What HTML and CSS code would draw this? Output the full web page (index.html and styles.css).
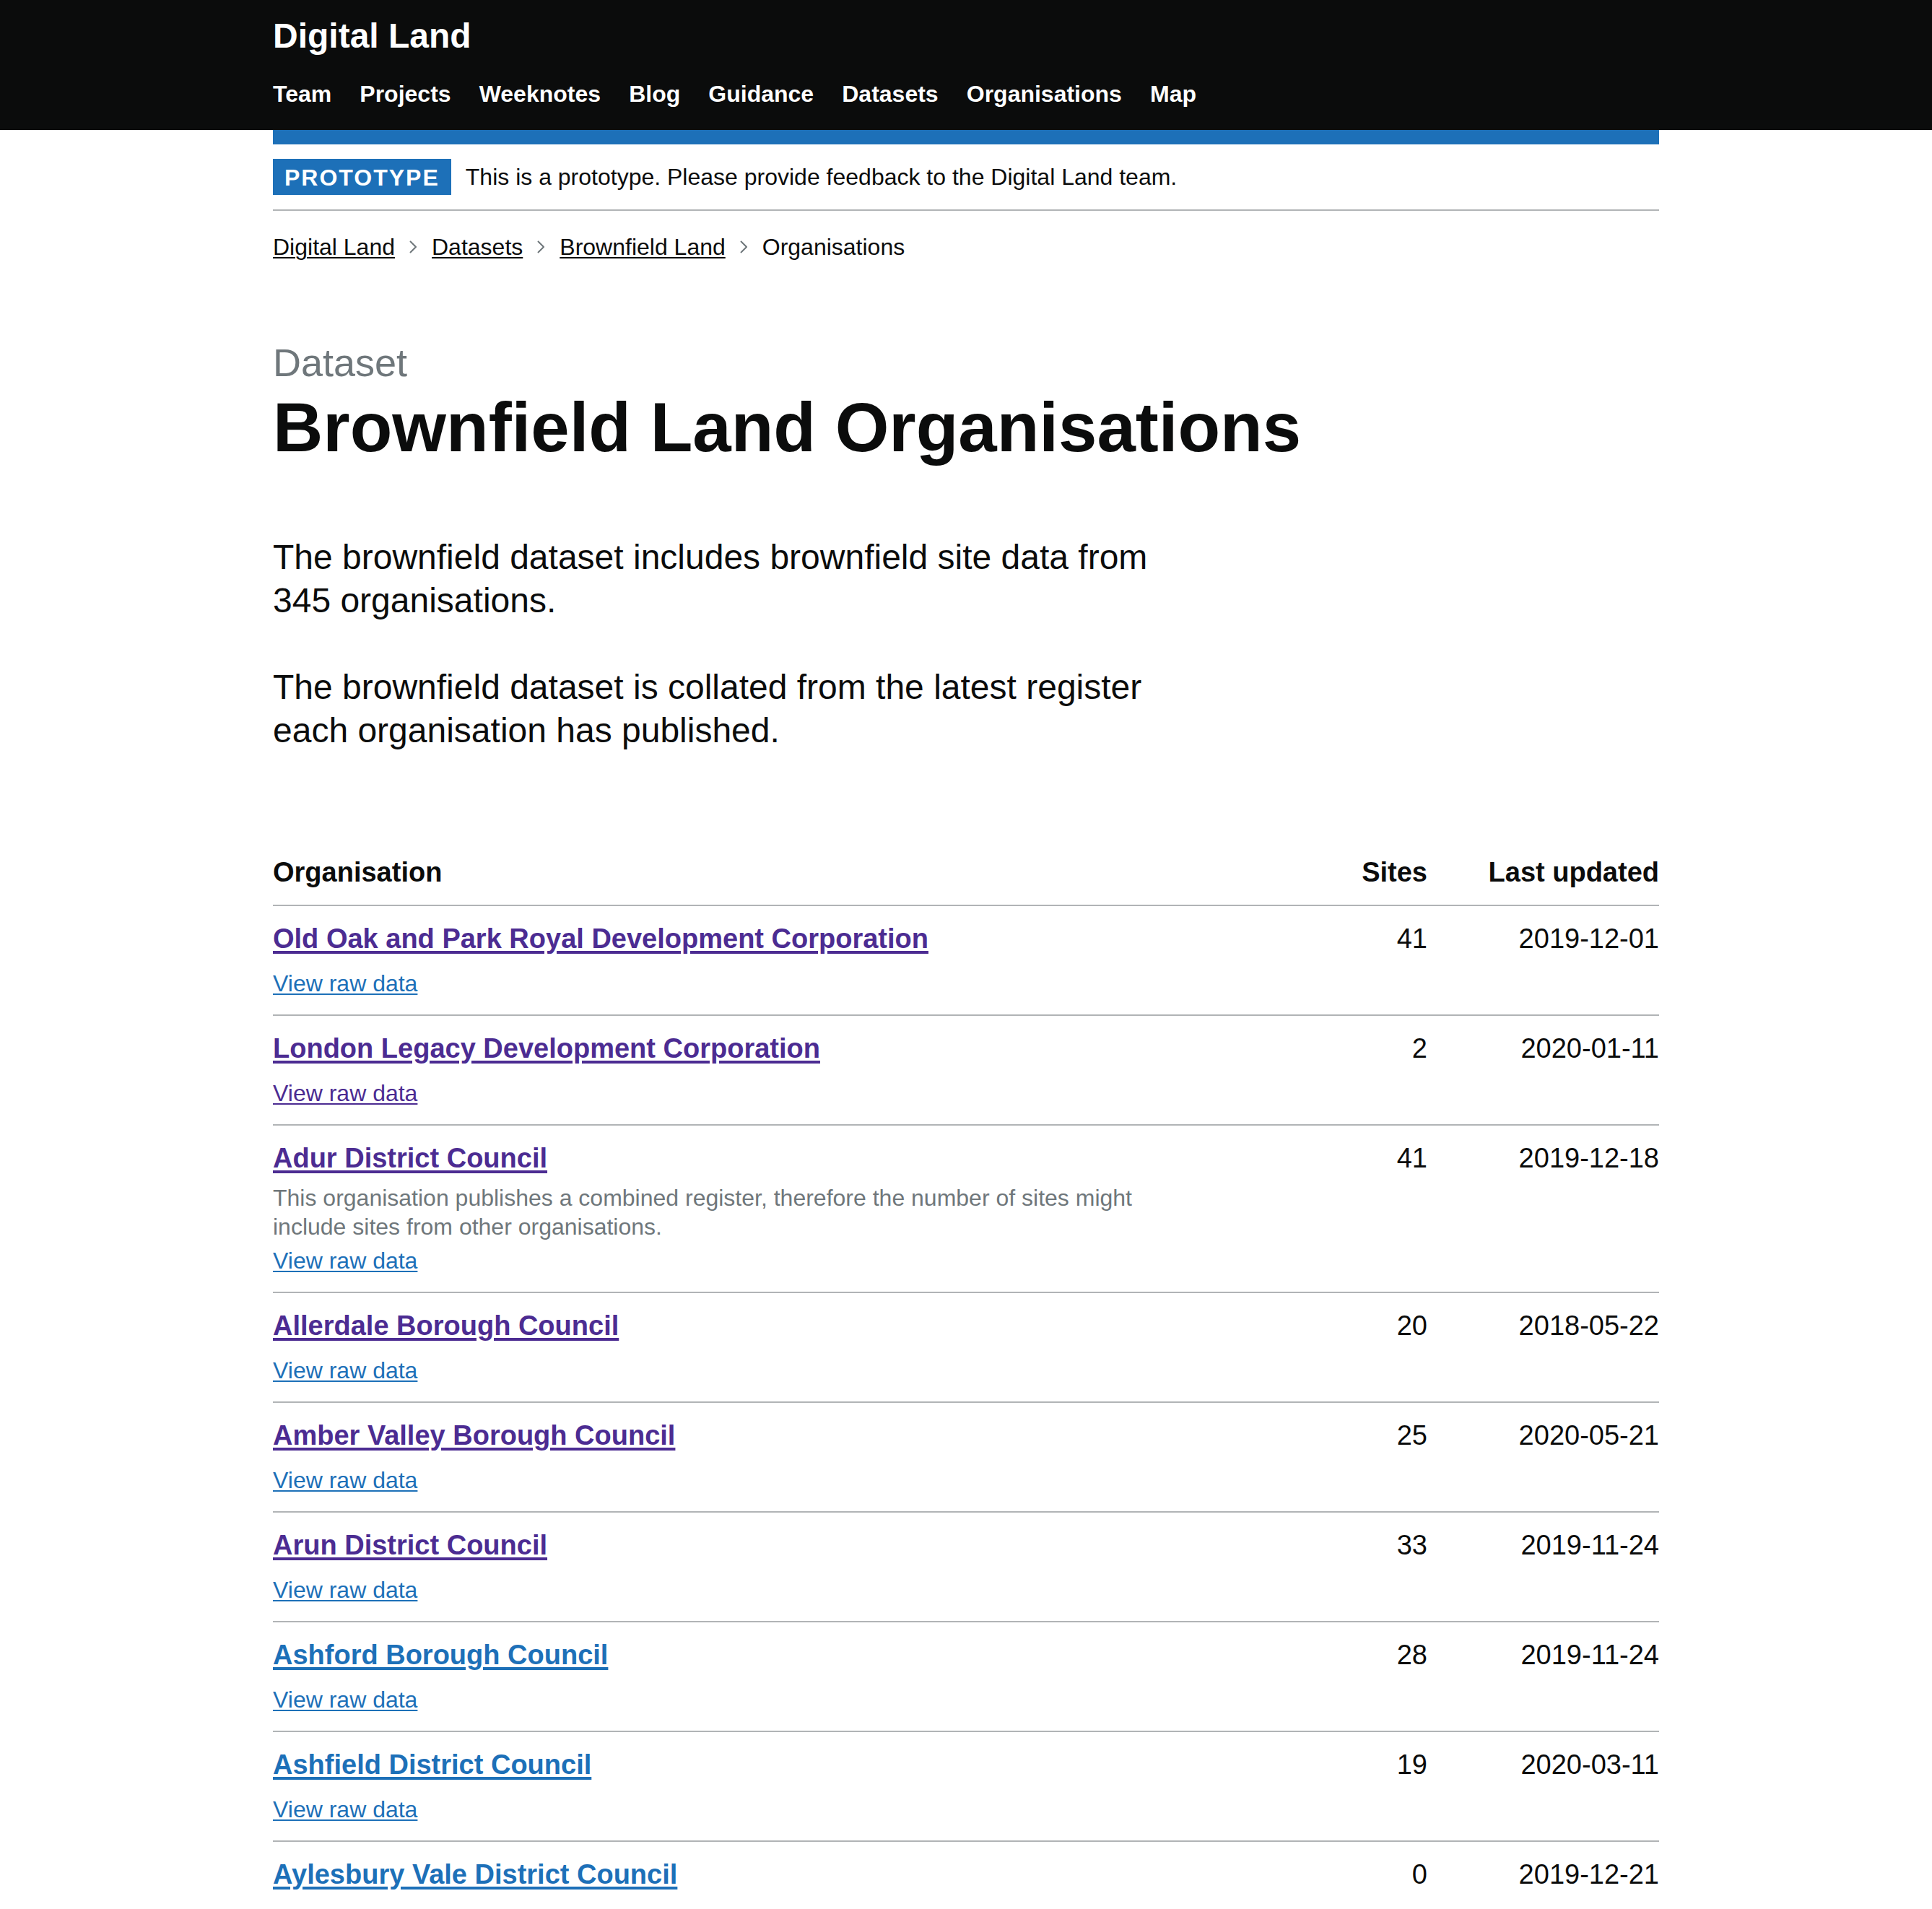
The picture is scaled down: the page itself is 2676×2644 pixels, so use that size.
FILE: index.html
```html
<!DOCTYPE html>
<html lang="en">
<head>
<meta charset="utf-8">
<title>Brownfield Land Organisations - Digital Land</title>
<link rel="stylesheet" href="styles.css">
</head>
<body>
<header class="site-header">
  <div class="container header-inner">
    <a class="service-name" href="#">Digital Land</a>
    <nav class="header-nav">
      <ul class="nav-list">
        <li><a href="#">Team</a></li>
        <li><a href="#">Projects</a></li>
        <li><a href="#">Weeknotes</a></li>
        <li><a href="#">Blog</a></li>
        <li><a href="#">Guidance</a></li>
        <li><a href="#">Datasets</a></li>
        <li><a href="#">Organisations</a></li>
        <li><a href="#">Map</a></li>
      </ul>
    </nav>
  </div>
</header>
<div class="container">
  <div class="header-rule"></div>
  <div class="phase-banner">
    <strong class="tag">Prototype</strong>
    <span class="phase-text">This is a prototype. Please provide feedback to the Digital Land team.</span>
  </div>
  <nav class="breadcrumbs">
    <ol class="crumb-list">
      <li><a href="#">Digital Land</a></li>
      <li class="sep"><svg width="10" height="20" viewBox="0 0 10 20"><polyline points="1,2 9,10 1,18" fill="none" stroke="#6f777b" stroke-width="2"/></svg></li>
      <li><a href="#">Datasets</a></li>
      <li class="sep"><svg width="10" height="20" viewBox="0 0 10 20"><polyline points="1,2 9,10 1,18" fill="none" stroke="#6f777b" stroke-width="2"/></svg></li>
      <li><a href="#">Brownfield Land</a></li>
      <li class="sep"><svg width="10" height="20" viewBox="0 0 10 20"><polyline points="1,2 9,10 1,18" fill="none" stroke="#6f777b" stroke-width="2"/></svg></li>
      <li class="current">Organisations</li>
    </ol>
  </nav>
  <main class="main">
    <span class="caption">Dataset</span>
    <h1 class="heading">Brownfield Land Organisations</h1>
    <div class="intro">
      <p>The brownfield dataset includes brownfield site data from 345 organisations.</p>
      <p>The brownfield dataset is collated from the latest register each organisation has published.</p>
    </div>
    <table class="org-table">
      <thead>
        <tr>
          <th class="col-org">Organisation</th>
          <th class="col-sites num">Sites</th>
          <th class="col-updated num">Last updated</th>
        </tr>
      </thead>
      <tbody>
        <tr>
          <td><div class="org-name"><a class="visited" href="#">Old Oak and Park Royal Development Corporation</a></div><div class="raw"><a href="#">View raw data</a></div></td>
          <td class="num">41</td>
          <td class="num">2019-12-01</td>
        </tr>
        <tr>
          <td><div class="org-name"><a class="visited" href="#">London Legacy Development Corporation</a></div><div class="raw"><a class="visited" href="#">View raw data</a></div></td>
          <td class="num">2</td>
          <td class="num">2020-01-11</td>
        </tr>
        <tr>
          <td><div class="org-name"><a class="visited" href="#">Adur District Council</a></div><p class="note">This organisation publishes a combined register, therefore the number of sites might include sites from other organisations.</p><div class="raw"><a href="#">View raw data</a></div></td>
          <td class="num">41</td>
          <td class="num">2019-12-18</td>
        </tr>
        <tr>
          <td><div class="org-name"><a class="visited" href="#">Allerdale Borough Council</a></div><div class="raw"><a href="#">View raw data</a></div></td>
          <td class="num">20</td>
          <td class="num">2018-05-22</td>
        </tr>
        <tr>
          <td><div class="org-name"><a class="visited" href="#">Amber Valley Borough Council</a></div><div class="raw"><a href="#">View raw data</a></div></td>
          <td class="num">25</td>
          <td class="num">2020-05-21</td>
        </tr>
        <tr>
          <td><div class="org-name"><a class="visited" href="#">Arun District Council</a></div><div class="raw"><a href="#">View raw data</a></div></td>
          <td class="num">33</td>
          <td class="num">2019-11-24</td>
        </tr>
        <tr>
          <td><div class="org-name"><a href="#">Ashford Borough Council</a></div><div class="raw"><a href="#">View raw data</a></div></td>
          <td class="num">28</td>
          <td class="num">2019-11-24</td>
        </tr>
        <tr>
          <td><div class="org-name"><a href="#">Ashfield District Council</a></div><div class="raw"><a href="#">View raw data</a></div></td>
          <td class="num">19</td>
          <td class="num">2020-03-11</td>
        </tr>
        <tr>
          <td><div class="org-name"><a href="#">Aylesbury Vale District Council</a></div><div class="raw"><a href="#">View raw data</a></div></td>
          <td class="num">0</td>
          <td class="num">2019-12-21</td>
        </tr>
      </tbody>
    </table>
  </main>
</div>
</body>
</html>
```
FILE: styles.css
```css
html, body {
  margin: 0;
  padding: 0;
  background: #ffffff;
}

body {
  font-family: "Liberation Sans", Arial, sans-serif;
  color: #0b0c0c;
}

.container {
  width: 1920px;
  margin: 0 auto;
}

/* Header */
.site-header {
  background: #0b0c0c;
}

.header-inner {
  display: flex;
  flex-direction: column;
  padding-top: 20px;
  padding-bottom: 30px;
}

.service-name {
  display: block;
  align-self: flex-start;
  color: #ffffff;
  text-decoration: none;
  font-weight: 700;
  font-size: 48px;
  line-height: 60px;
}

.header-nav {
  margin-top: 30px;
}

.nav-list {
  display: flex;
  gap: 39.1px;
  list-style: none;
  margin: 0;
  padding: 0;
}

.nav-list a {
  color: #ffffff;
  text-decoration: none;
  font-weight: 700;
  font-size: 32px;
  line-height: 40px;
}

.header-rule {
  height: 20px;
  background: #1d70b8;
}

/* Phase banner */
.phase-banner {
  display: flex;
  align-items: center;
  padding: 20px 0;
  border-bottom: 2px solid #b1b4b6;
}

.tag {
  display: inline-block;
  background: #1d70b8;
  color: #ffffff;
  font-weight: 700;
  font-size: 32px;
  line-height: 32px;
  padding: 10px 16px 8px;
  letter-spacing: 2px;
  text-transform: uppercase;
  margin-right: 20px;
}

.phase-text {
  font-size: 32px;
  line-height: 40px;
}

/* Breadcrumbs */
.breadcrumbs {
  margin-top: 30px;
  margin-bottom: 20px;
}

.crumb-list {
  display: flex;
  align-items: center;
  list-style: none;
  margin: 0;
  padding: 0;
  font-size: 32px;
  line-height: 40px;
}

.crumb-list a {
  color: #0b0c0c;
  text-decoration: underline;
  text-decoration-thickness: 2px;
  text-underline-offset: 0.1em;
}

.crumb-list .sep {
  display: flex;
  align-items: center;
  margin: 0 21px 0 20px;
}

/* Main */
.main {
  display: block;
  padding-top: 90px;
  padding-bottom: 80px;
}

.caption {
  display: block;
  font-size: 54px;
  line-height: 60px;
  color: #6f777b;
  margin-bottom: 10px;
}

.heading {
  font-size: 96px;
  line-height: 100px;
  font-weight: 700;
  margin: 0 0 100px;
}

.intro {
  max-width: 1260px;
  display: flex;
  flex-direction: column;
  gap: 60px;
  margin-bottom: 121px;
}

.intro p {
  margin: 0;
  font-size: 48px;
  line-height: 60px;
}

/* Table */
.org-table {
  width: 100%;
  border-collapse: collapse;
  border-spacing: 0;
  table-layout: fixed;
  font-size: 38px;
  line-height: 50px;
}

.org-table th,
.org-table td {
  padding: 20px 40px 20px 0;
  border-bottom: 2px solid #b1b4b6;
  vertical-align: top;
  text-align: left;
}

.org-table th {
  font-weight: 700;
}

.org-table th:last-child,
.org-table td:last-child {
  padding-right: 0;
}

.org-table .num {
  text-align: right;
}

.org-table .col-sites {
  width: 160px;
}

.org-table .col-updated {
  width: 281px;
}

.org-name a {
  font-weight: 700;
  color: #1d70b8;
  text-decoration: underline;
  text-decoration-thickness: 4px;
  text-underline-offset: 0.1em;
}

.raw {
  margin-top: 17px;
  padding-bottom: 3px;
  font-size: 32px;
  line-height: 40px;
}

.raw a {
  color: #1d70b8;
  text-decoration: underline;
  text-decoration-thickness: 2px;
  text-underline-offset: 0.1em;
}

.org-table a.visited {
  color: #4c2c92;
}

.note {
  max-width: 1260px;
  margin: 10px 0 0;
  font-size: 32px;
  line-height: 40px;
  color: #6f777b;
}

.note + .raw {
  margin-top: 7px;
}
```
